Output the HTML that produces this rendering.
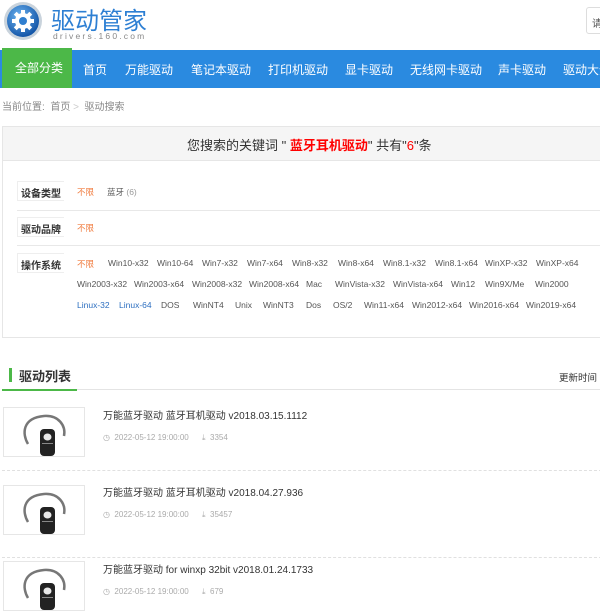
<!DOCTYPE html>
<html><head><meta charset="utf-8"><style>
*{margin:0;padding:0;box-sizing:border-box}
body{width:600px;height:613px;overflow:hidden;background:#fff;font-family:"Liberation Sans","Noto Sans CJK SC",sans-serif;position:relative;color:#333}
.a{position:absolute;white-space:nowrap}
.nav{position:absolute;left:0;top:50px;width:600px;height:38px;background:#2a8ae0;overflow:hidden}
.nav span{position:absolute;top:11px;color:#fff;font-size:12px;white-space:nowrap}
.os{font-size:8.5px;color:#555;position:absolute;white-space:nowrap}
.lab{position:absolute;left:17px;width:47px;height:20px;background:#fff;border:1px solid #eee;border-right:none;font-size:10px;font-weight:bold;color:#333;padding:3px 0 0 3px}
.sep{position:absolute;left:17px;right:0;height:1px;background:#e8e8e8}
.img{position:absolute;left:3px;width:82px;height:50px;border:1px solid #e6e6e6;background:#fff}
.ttl{position:absolute;left:103px;font-size:10px;color:#333;white-space:nowrap}
.meta{position:absolute;left:103px;font-size:8px;color:#aaa;white-space:nowrap}
</style></head><body>
<svg class="a" style="left:3px;top:1px" width="40" height="40" viewBox="0 0 40 40">
<defs><radialGradient id="g" cx="40%" cy="35%" r="65%"><stop offset="0" stop-color="#6fb6f2"/><stop offset="1" stop-color="#1456a8"/></radialGradient></defs>
<circle cx="20" cy="20" r="19" fill="#c9d3dc"/><circle cx="20" cy="20" r="16" fill="url(#g)"/>
<g fill="#fff" transform="translate(20 20)"><circle r="8"/><rect x="-2" y="-11" width="4" height="22"/><rect x="-11" y="-2" width="22" height="4"/><rect x="-2" y="-11" width="4" height="22" transform="rotate(45)"/><rect x="-2" y="-11" width="4" height="22" transform="rotate(-45)"/></g>
<circle cx="20" cy="20" r="4" fill="#2f7fd0"/></svg>
<div class="a" style="left:51px;top:1px;font-size:24px;color:#2d7fd3">驱动管家</div>
<div class="a" style="left:53px;top:31px;font-size:8.5px;color:#888;letter-spacing:2.2px">drivers.160.com</div>
<div class="a" style="left:586px;top:7px;width:30px;height:27px;border:1px solid #ddd;border-radius:3px;font-size:10px;padding:7px 0 0 5px;color:#555">请</div>
<div class="nav">
<span style="left:83px">首页</span><span style="left:125px">万能驱动</span><span style="left:191px">笔记本驱动</span><span style="left:268px">打印机驱动</span><span style="left:345px">显卡驱动</span><span style="left:410px">无线网卡驱动</span><span style="left:498px">声卡驱动</span><span style="left:563px">驱动大全</span>
</div>
<div class="a" style="left:2px;top:48px;width:70px;height:40px;background:#4cb848;color:#fff;font-size:12px;padding:11px 0 0 13px">全部分类</div>
<div class="a" style="left:2px;top:98px;font-size:10px;color:#888">当前位置: &nbsp;<span style="color:#888">首页</span> <span style="color:#ccc">&gt;</span>&nbsp; 驱动搜索</div>
<div class="a" style="left:2px;top:126px;width:610px;height:212px;border:1px solid #e6e6e6"></div>
<div class="a" style="left:3px;top:127px;width:600px;height:34px;background:#f5f5f5;border-bottom:1px solid #e6e6e6"></div>
<div class="a" style="left:187px;top:135px;font-size:13px;color:#333">您搜索的关键词 " <b style="color:#f00">蓝牙耳机驱动</b>" 共有"<span style="color:#f00">6</span>"条</div>
<div class="lab" style="top:181px">设备类型</div>
<div class="a" style="left:77px;top:186px;font-size:8.5px;color:#f07a3c">不限</div>
<div class="a" style="left:107px;top:186px;font-size:8.5px;color:#555">蓝牙 <span style="color:#999">(6)</span></div>
<div class="sep" style="top:210px"></div>
<div class="lab" style="top:217px">驱动品牌</div>
<div class="a" style="left:77px;top:222px;font-size:8.5px;color:#f07a3c">不限</div>
<div class="sep" style="top:245px"></div>
<div class="lab" style="top:253px">操作系统</div>
<div class="os" style="left:77px;top:258px;color:#f07a3c">不限</div>
<div class="os" style="left:108px;top:258px">Win10-x32</div><div class="os" style="left:157px;top:258px">Win10-64</div><div class="os" style="left:202px;top:258px">Win7-x32</div><div class="os" style="left:247px;top:258px">Win7-x64</div><div class="os" style="left:292px;top:258px">Win8-x32</div><div class="os" style="left:338px;top:258px">Win8-x64</div><div class="os" style="left:383px;top:258px">Win8.1-x32</div><div class="os" style="left:435px;top:258px">Win8.1-x64</div><div class="os" style="left:485px;top:258px">WinXP-x32</div><div class="os" style="left:536px;top:258px">WinXP-x64</div>
<div class="os" style="left:77px;top:279px">Win2003-x32</div><div class="os" style="left:134px;top:279px">Win2003-x64</div><div class="os" style="left:192px;top:279px">Win2008-x32</div><div class="os" style="left:249px;top:279px">Win2008-x64</div><div class="os" style="left:306px;top:279px">Mac</div><div class="os" style="left:335px;top:279px">WinVista-x32</div><div class="os" style="left:393px;top:279px">WinVista-x64</div><div class="os" style="left:451px;top:279px">Win12</div><div class="os" style="left:485px;top:279px">Win9X/Me</div><div class="os" style="left:535px;top:279px">Win2000</div>
<div class="os" style="left:77px;top:300px;color:#2d6fc0">Linux-32</div><div class="os" style="left:119px;top:300px;color:#2d6fc0">Linux-64</div><div class="os" style="left:161px;top:300px">DOS</div><div class="os" style="left:193px;top:300px">WinNT4</div><div class="os" style="left:235px;top:300px">Unix</div><div class="os" style="left:263px;top:300px">WinNT3</div><div class="os" style="left:306px;top:300px">Dos</div><div class="os" style="left:333px;top:300px">OS/2</div><div class="os" style="left:364px;top:300px">Win11-x64</div><div class="os" style="left:412px;top:300px">Win2012-x64</div><div class="os" style="left:469px;top:300px">Win2016-x64</div><div class="os" style="left:526px;top:300px">Win2019-x64</div>
<div class="a" style="left:9px;top:368px;width:3px;height:14px;background:#4cb848"></div>
<div class="a" style="left:19px;top:366px;font-size:13px;font-weight:bold;color:#333">驱动列表</div>
<div class="a" style="left:559px;top:370px;font-size:9.5px;color:#333">更新时间</div>
<div class="a" style="left:2px;top:389px;width:600px;height:1px;background:#e4e4e4"></div>
<div class="a" style="left:2px;top:389px;width:75px;height:2px;background:#4cb848"></div>
<svg width="0" height="0" style="position:absolute"><defs><g id="hs"><path d="M24 36 C18 26 18 10 40 8 C55 7 62 18 60 28" stroke="#777" stroke-width="2.5" fill="none"/><rect x="36" y="21" width="15" height="27" rx="4" fill="#222"/><ellipse cx="43.5" cy="29" rx="4" ry="3.5" fill="#e8e8e8"/><rect x="38" y="35" width="11" height="1" fill="#888"/></g></defs></svg>
<div class="img" style="top:407px"><svg width="80" height="48"><use href="#hs"/></svg></div>
<div class="ttl" style="top:407px">万能蓝牙驱动 蓝牙耳机驱动 v2018.03.15.1112</div>
<div class="meta" style="top:433px">◷ &nbsp;2022-05-12 19:00:00 &nbsp;&nbsp;&nbsp;&nbsp; ⤓ &nbsp;3354</div>
<div class="a" style="left:2px;top:470px;width:600px;border-top:1px dashed #e0e0e0"></div>
<div class="img" style="top:485px"><svg width="80" height="48"><use href="#hs"/></svg></div>
<div class="ttl" style="top:484px">万能蓝牙驱动 蓝牙耳机驱动 v2018.04.27.936</div>
<div class="meta" style="top:510px">◷ &nbsp;2022-05-12 19:00:00 &nbsp;&nbsp;&nbsp;&nbsp; ⤓ &nbsp;35457</div>
<div class="a" style="left:2px;top:557px;width:600px;border-top:1px dashed #e0e0e0"></div>
<div class="img" style="top:561px"><svg width="80" height="48"><use href="#hs"/></svg></div>
<div class="ttl" style="top:561px">万能蓝牙驱动 for winxp 32bit v2018.01.24.1733</div>
<div class="meta" style="top:587px">◷ &nbsp;2022-05-12 19:00:00 &nbsp;&nbsp;&nbsp;&nbsp; ⤓ &nbsp;679</div>
</body></html>
